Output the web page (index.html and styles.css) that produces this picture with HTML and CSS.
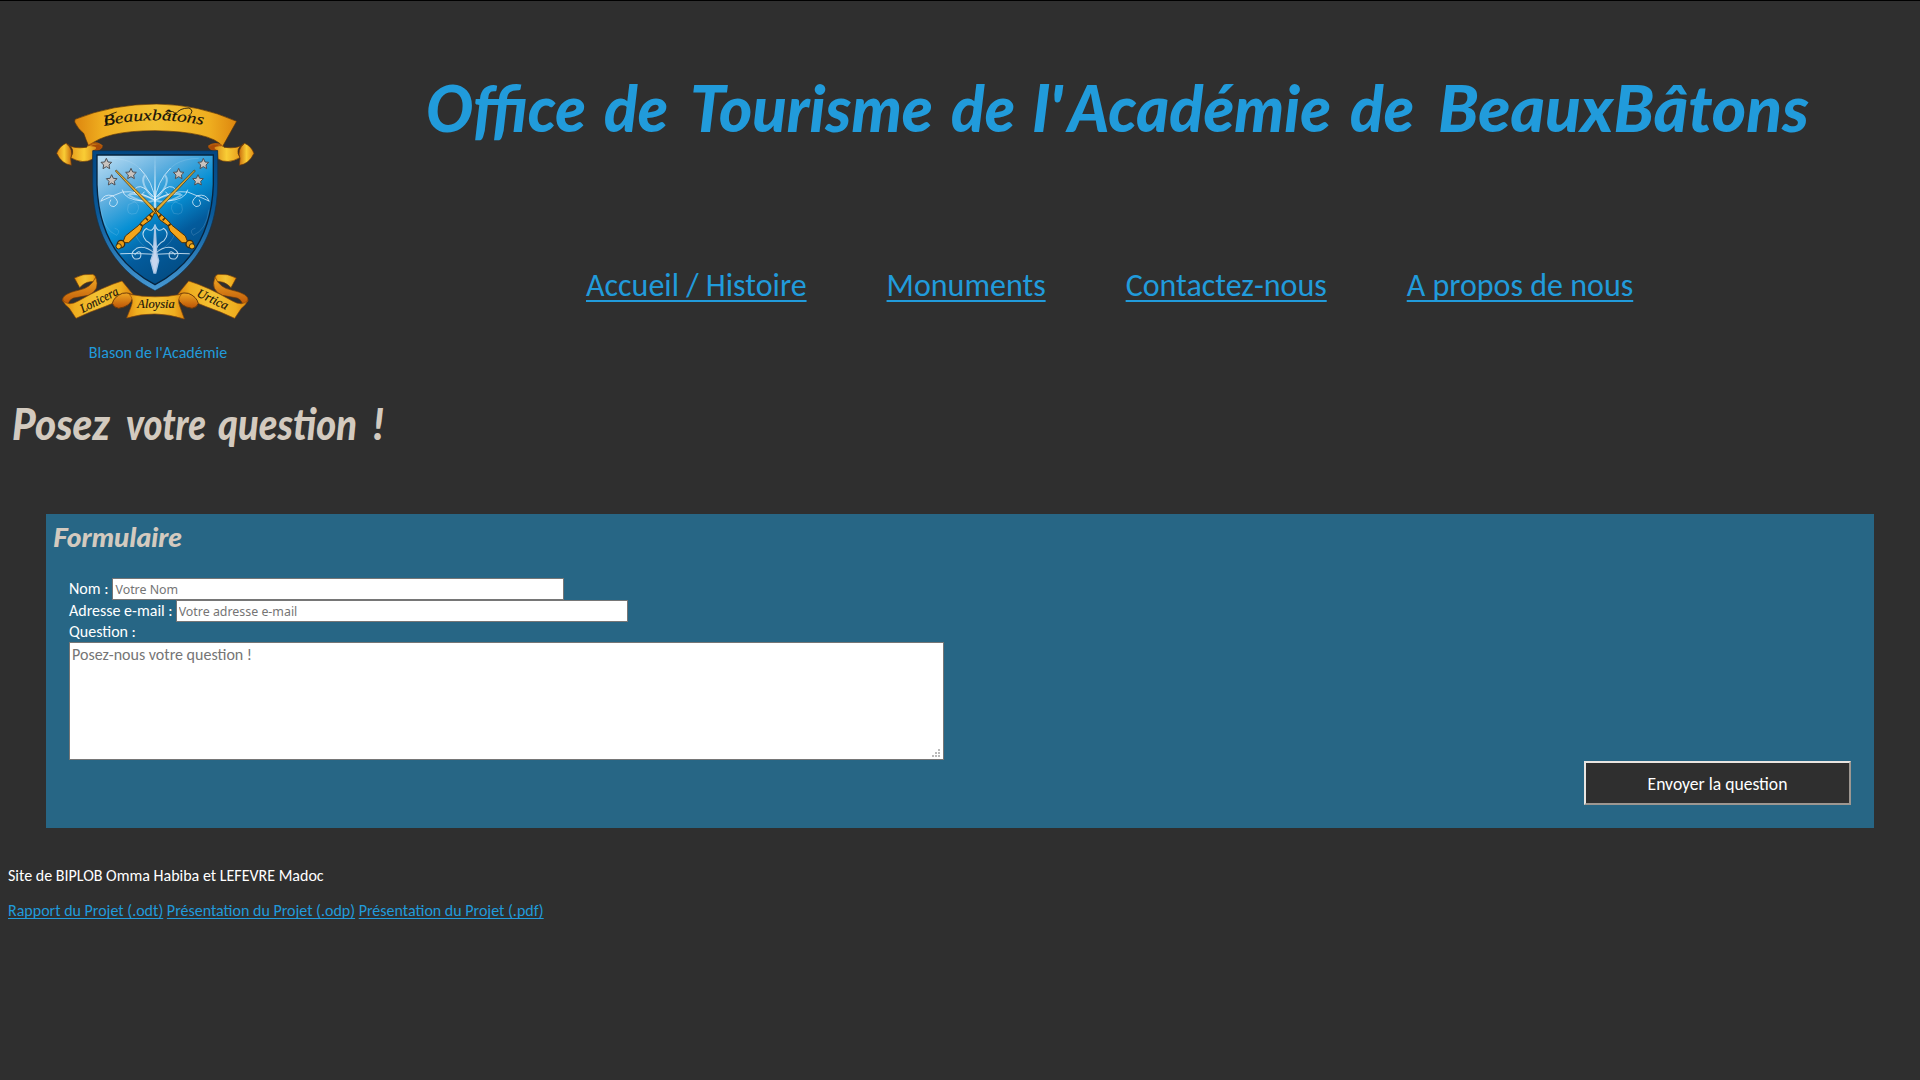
FILE: index.html
```html
<!DOCTYPE html>
<html lang="fr">
<head>
<meta charset="utf-8">
<title>Contactez-nous</title>
<link rel="stylesheet" href="styles.css">
</head>
<body>
<header class="header">
  <figure class="crest">
    <svg class="crest-art" viewBox="0 0 690 720" aria-label="Blason">
      <defs>
        <linearGradient id="field" x1=".1" y1="0" x2=".65" y2="1"><stop offset="0" stop-color="#b4daf2"/><stop offset=".25" stop-color="#64b1e0"/><stop offset=".5" stop-color="#0790d4"/><stop offset=".72" stop-color="#035b9c"/><stop offset="1" stop-color="#034a80"/></linearGradient>
        <linearGradient id="rim" x1="0" y1="0" x2="0" y2="1"><stop offset="0" stop-color="#034782"/><stop offset=".45" stop-color="#0a5a9a"/><stop offset="1" stop-color="#4798d2"/></linearGradient>
        <linearGradient id="gold" x1="0" y1="0" x2="1" y2="0"><stop offset="0" stop-color="#dd860f"/><stop offset=".17" stop-color="#efae1f"/><stop offset=".5" stop-color="#f3c234"/><stop offset=".83" stop-color="#efae1f"/><stop offset="1" stop-color="#dd860f"/></linearGradient>
        <linearGradient id="tail" x1="0" y1="0" x2="1" y2="0"><stop offset="0" stop-color="#e18c14"/><stop offset=".5" stop-color="#f9cd35"/><stop offset="1" stop-color="#c96a0c"/></linearGradient>
        <linearGradient id="fold" x1="0" y1="0" x2="0" y2="1"><stop offset="0" stop-color="#f0a722"/><stop offset="1" stop-color="#ba5207"/></linearGradient>
        <path id="star" d="M0-16 5-5 16-4 8 4 10 15 0 9-10 15-8 4-16-4-5-5Z"/>
        <path id="motto" d="M192 108Q345 74 505 108"/>
        <path id="motto-left" d="M128 669L250 606"/>
        <path id="motto-right" d="M468 618L566 664"/>
        <g id="side-top">
          <path d="M146 162Q188 158 187 172Q178 185 160 181L158 207Q130 224 92 203Q110 176 78 160Q96 178 140 172Z" fill="url(#tail)" stroke="#6e3a08" stroke-width="2"/>
          <path d="M78 160Q103 180 92 205L94 226Q65 222 50 190Q59 168 78 160Z" fill="url(#tail)" stroke="#6e3a08" stroke-width="2"/>
          <path d="M148 168Q186 158 187 171Q174 187 162 180Q180 170 148 168Z" fill="#a94b08"/>
        </g>
        <g id="side-low">
          <path d="M103 564Q128 550 158 553Q172 558 167 576Q140 570 119 593Z" fill="url(#gold)" stroke="#6e3a08" stroke-width="2"/>
          <path d="M167 562Q182 600 145 616L112 622Q85 624 84 648L68 634Q62 612 118 600Q152 594 167 562Z" fill="url(#fold)" stroke="#6e3a08" stroke-width="2"/>
          <path d="M68 630Q85 651 115 633Q190 590 246 573L278 612Q239 617 218 640L196 649Q150 665 108 685L88 655Q74 645 68 630Z" fill="url(#gold)" stroke="#8d4a08" stroke-width="2"/>
          <path d="M217 640Q222 620 247 610Q276 605 279 622Q272 650 236 655Q221 653 217 640Z" fill="url(#fold)" stroke="#6e3a08" stroke-width="3"/>
        </g>
        <g id="wand">
          <path d="M463 240L338 365L345 372L466 243Z" fill="#e0ac32" stroke="#392c14" stroke-width="2"/>
          <path d="M350 356L324 377L308 392L296 406L256 438L248 458L266 458L302 423L308 407L333 389L342 371Z" fill="#f4a51b" stroke="#503207" stroke-width="3"/>
          <path d="M300 402L308 408M317 384L324 391M328 373L336 382" stroke="#503207" stroke-width="5"/>
          <circle cx="243" cy="462" r="11" fill="#e99b14" stroke="#392c14" stroke-width="4"/><circle cx="236" cy="469" r="8" fill="#f6b320" stroke="#392c14" stroke-width="3"/>
        </g>
        <g id="flourish" fill="none" stroke="#e5f3fd" stroke-linecap="round">
          <path d="M344 335Q350 275 391 235M345 325Q370 295 388 290Q410 290 406 310Q390 325 377 306M346 330Q400 300 443 306Q474 318 507 333M380 333Q438 330 443 300M507 333Q499 310 472 317Q445 337 468 350Q489 348 478 330" stroke-width="3" opacity=".75"/>
          <path d="M350 332Q375 344 425 315M354 320Q390 280 377 258M348 330Q380 310 420 312" stroke-width="6" opacity=".5"/>
          <path d="M345 360Q390 320 425 344Q435 380 401 370Q380 340 420 330M475 205Q390 207 370 270M507 360Q499 420 460 436Q445 420 465 415M360 385Q405 400 401 440Q380 480 345 480" stroke-width="1.5" opacity=".3"/>
          <path d="M346 407Q353 430 371 415Q391 430 372 452Q348 463 346 490Q377 464 400 475Q424 490 407 506Q384 511 388 489Q395 480 405 494M348 493Q390 490 448 491" stroke-width="3.2" opacity=".8"/>
        </g>
      </defs>
      <use href="#side-top"/>
      <use href="#side-top" transform="matrix(-1 0 0 1 692 0)"/>
      <path d="M105 88Q218 42 350 42Q475 43 590 94L548 169Q513 125 345 122Q196 122 146 168Q139 152 131 130Q113 116 104 96Z" fill="url(#gold)" stroke="#5c3509" stroke-width="2"/>
      <path d="M146 166Q170 151 187 169M545 167Q524 155 506 169" fill="none" stroke="#b15a0b" stroke-width="5"/>
      <text class="script" font-size="46"><textPath href="#motto" textLength="300" lengthAdjust="spacingAndGlyphs">Beauxbâtons</textPath></text>
      <path d="M391 78Q370 74 384 66Q399 60 407 72Q419 54 447 54Q464 62 448 76" fill="none" stroke="#17120a" stroke-width="2.5"/>
      <path d="M230 66Q192 78 196 96Q204 106 222 98" fill="none" stroke="#17120a" stroke-width="2.5"/>
      <path d="M158 182H533V280C532 445 453 548 345 602C237 548 159 445 158 280Z" fill="url(#rim)" stroke="#12324b" stroke-width="2"/>
      <path d="M171 195H520V284C515 432 450 529 345 584C240 529 175 432 171 284Z" fill="url(#field)" stroke="#07243e" stroke-width="4"/>
      <use href="#flourish"/>
      <use href="#flourish" transform="matrix(-1 0 0 1 690 0)"/>
      <path d="M345 197L349 355H341Z" fill="#e9f5fd" opacity=".75"/>
      <path d="M345 403L350 489L356 512L347 549L342 549L332 512L340 489Z" fill="#c9d7ef" stroke="#a9c6e5" stroke-width="4"/>
      <use href="#wand"/>
      <use href="#wand" transform="matrix(-1 0 0 1 692 0)"/>
      <g fill="#c9c3bf" stroke="#4d5157" stroke-width="3">
        <use href="#star" x="199" y="221"/><use href="#star" x="273" y="251"/><use href="#star" x="215" y="270"/>
        <use href="#star" x="490" y="221"/><use href="#star" x="416" y="251"/><use href="#star" x="474" y="270"/>
      </g>
      <use href="#side-low"/>
      <use href="#side-low" transform="matrix(-1 0 0 1 692 0)"/>
      <path d="M260 684L273 651Q283 628 268 613Q345 628 424 613Q410 628 420 651L433 687Q345 658 260 684Z" fill="url(#gold)" stroke="#8d4a08" stroke-width="2"/>
      <text class="script" font-size="38"><textPath href="#motto-left" textLength="124" lengthAdjust="spacingAndGlyphs">Lonicera</textPath></text>
      <text class="script" x="292" y="653" font-size="38" textLength="112" lengthAdjust="spacingAndGlyphs">Aloysia</text>
      <text class="script" font-size="38"><textPath href="#motto-right" textLength="99" lengthAdjust="spacingAndGlyphs">Urtica</textPath></text>
    </svg>
    <figcaption class="caption">Blason de l'Académie</figcaption>
  </figure>
  <div class="heading">
    <h1 class="title">
      <svg class="title-art" viewBox="410 50 1410 110">
        <g class="brush" font-size="65">
          <text x="426" y="132" textLength="160" lengthAdjust="spacingAndGlyphs">Office</text>
          <text x="604" y="132" textLength="64" lengthAdjust="spacingAndGlyphs">de</text>
          <text x="690" y="132" textLength="243" lengthAdjust="spacingAndGlyphs">Tourisme</text>
          <text x="951" y="132" textLength="64" lengthAdjust="spacingAndGlyphs">de</text>
          <text x="1033" y="132" textLength="30" lengthAdjust="spacingAndGlyphs">l'</text>
          <text x="1068" y="132" textLength="263" lengthAdjust="spacingAndGlyphs">Académie</text>
          <text x="1350" y="132" textLength="64" lengthAdjust="spacingAndGlyphs">de</text>
          <text x="1438" y="132" textLength="371" lengthAdjust="spacingAndGlyphs">BeauxBâtons</text>
        </g>
      </svg>
    </h1>
    <nav class="nav">
      <a href="#">Accueil / Histoire</a>
      <a href="#">Monuments</a>
      <a href="#">Contactez-nous</a>
      <a href="#">A propos de nous</a>
    </nav>
  </div>
</header>
<main>
  <h2 class="question-title">
    <svg class="question-art" viewBox="0 390 420 80">
      <g class="brush" font-size="43">
        <text x="12" y="440" textLength="98" lengthAdjust="spacingAndGlyphs">Posez</text>
        <text x="126" y="440" textLength="80" lengthAdjust="spacingAndGlyphs">votre</text>
        <text x="218" y="440" textLength="139" lengthAdjust="spacingAndGlyphs">question</text>
        <text x="373" y="440" textLength="11" lengthAdjust="spacingAndGlyphs">!</text>
      </g>
    </svg>
  </h2>
  <form class="form">
    <h3 class="form-title">
      <svg class="form-art" viewBox="46 514 200 64">
        <text class="brush" x="53" y="547" font-size="27" textLength="129" lengthAdjust="spacingAndGlyphs">Formulaire</text>
      </svg>
    </h3>
    <div class="fields">
      <label class="row">Nom : <input class="field" type="text" placeholder="Votre Nom"></label>
      <label class="row row-mail">Adresse e-mail : <input class="field" type="text" placeholder="Votre adresse e-mail"></label>
      <label class="question-label" for="question">Question :</label>
      <textarea class="area" id="question" placeholder="Posez-nous votre question !"></textarea>
      <button class="send" type="button">Envoyer la question</button>
    </div>
  </form>
</main>
<footer class="footer">
  <p class="credit">Site de BIPLOB Omma Habiba et LEFEVRE Madoc</p>
  <p class="links"><a href="#">Rapport du Projet (.odt)</a> <a href="#">Présentation du Projet (.odp)</a> <a href="#">Présentation du Projet (.pdf)</a></p>
</footer>
</body>
</html>
```
FILE: styles.css
```css
* { box-sizing: border-box; }

html { background: #2f2f2f; }

body {
  margin: 0;
  min-height: 100vh;
  border-top: 1px solid #000;
  background: #2f2f2f;
  color: #fff;
  font: 16px/20px Calibri, Carlito, Lato, sans-serif;
}

h1, h2, h3, p, figure { margin: 0; }
svg { display: block; }
a { color: #219bdb; text-decoration-skip-ink: none; }

.header { display: flex; height: 389px; }

.crest {
  width: 230px;
  margin: 89px 0 0 40px;
}

.crest-art { width: 230px; height: 240px; }

.caption {
  margin: 13px 0 0 5px;
  width: 230px;
  padding-right: 4px;
  color: #219bdb;
  text-align: center;
}

.script {
  font-family: "Liberation Serif", serif;
  font-style: italic;
  fill: #17120a;
  stroke: #17120a;
  stroke-width: .5;
}

.brush {
  font-family: Lato, sans-serif;
  font-weight: 900;
  font-style: italic;
  fill: #d3cabf;
}

.heading { padding: 49px 0 0 140px; }
.title-art { width: 1410px; height: 110px; }
.title .brush { fill: #219bdb; }

.nav {
  display: flex;
  gap: 80px;
  padding: 106px 0 0 176px;
  font-size: 32px;
  line-height: 40px;
}

.nav a {
  text-decoration-thickness: 2px;
  text-underline-offset: 4px;
}

.question-art { width: 420px; height: 80px; }

.form {
  height: 314px;
  margin: 44px 46px 0;
  background: #276685;
}

.form-art { width: 200px; height: 64px; }

.fields {
  display: flex;
  flex-direction: column;
  align-items: flex-start;
  padding: 0 23px;
}

.row {
  display: flex;
  gap: 4px;
  height: 22px;
  line-height: 22px;
}

.row-mail { gap: 3px; }

.field {
  width: 452px;
  height: 22px;
  padding: 1px 2px;
  border: 1px solid #767676;
  background: #fff;
  font: 12.4px "Noto Sans", sans-serif;
}

.field::placeholder, .area::placeholder { color: #757575; }

.area {
  --dot: linear-gradient(#bbb, #bbb);
  width: 875px;
  height: 118px;
  padding: 2px;
  border: 1px solid #767676;
  background:
    var(--dot) right 3px bottom 2px / 2px 2px no-repeat,
    var(--dot) right 6px bottom 2px / 2px 2px no-repeat,
    var(--dot) right 9px bottom 2px / 2px 2px no-repeat,
    var(--dot) right 3px bottom 5px / 2px 2px no-repeat,
    var(--dot) right 6px bottom 5px / 2px 2px no-repeat,
    var(--dot) right 3px bottom 8px / 2px 2px no-repeat,
    #fff;
  font: 16px/20px Calibri, Carlito, Lato, sans-serif;
  resize: none;
}

.send {
  align-self: flex-end;
  width: 267px;
  height: 44px;
  margin-top: 1px;
  padding: 2px 0 0;
  border: 2px solid;
  border-color: #e9e5e1 #9d9791 #9d9791 #e9e5e1;
  background: #2f2f2f;
  color: #fff;
  font: 17.6px/20px Calibri, Carlito, Lato, sans-serif;
}

.footer { padding: 38px 8px 0; }
.links { margin-top: 15px; }
.links a { text-decoration-thickness: 1px; text-underline-offset: 2px; }
```
